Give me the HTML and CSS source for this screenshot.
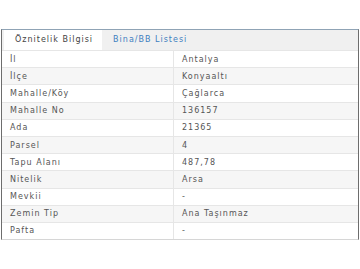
FILE: index.html
```html
<!DOCTYPE html>
<html>
<head>
<meta charset="utf-8">
<link rel="stylesheet" href="styles.css">
</head>
<body>
<div class="panel">
  <div class="tabs">
    <div class="tab active">Öznitelik Bilgisi</div>
    <div class="tab">Bina/BB Listesi</div>
  </div>
  <table class="attrs">
    <tr><td class="k">İl</td><td class="v">Antalya</td></tr>
    <tr><td class="k">İlçe</td><td class="v">Konyaaltı</td></tr>
    <tr><td class="k">Mahalle/Köy</td><td class="v">Çağlarca</td></tr>
    <tr><td class="k">Mahalle No</td><td class="v">136157</td></tr>
    <tr><td class="k">Ada</td><td class="v">21365</td></tr>
    <tr><td class="k">Parsel</td><td class="v">4</td></tr>
    <tr><td class="k">Tapu Alanı</td><td class="v">487,78</td></tr>
    <tr><td class="k">Nitelik</td><td class="v">Arsa</td></tr>
    <tr><td class="k">Mevkii</td><td class="v">-</td></tr>
    <tr><td class="k">Zemin Tip</td><td class="v">Ana Taşınmaz</td></tr>
    <tr><td class="k">Pafta</td><td class="v">-</td></tr>
  </table>
</div>
</body>
</html>
```
FILE: styles.css
```css
html, body {
  margin: 0;
  padding: 0;
  background: #fff;
}
body {
  padding: 29px 1px 0 1px;
  font-family: "DejaVu Sans", Verdana, sans-serif;
}
.panel {
  width: 356px;
  border-top: 1px solid #8fa3b5;
  border-left: 1px solid #6d6d6d;
  border-right: 1px solid #6d6d6d;
  border-bottom: 1px solid #d6d6d6;
  background: #fff;
}
.tabs {
  display: flex;
  height: 20px;
  background: #f0f0f0;
  padding-left: 2px;
  border-bottom: 1px solid #e6e6e6;
}
.tab {
  font-size: 8px;
  letter-spacing: 1px;
  line-height: 20px;
  padding: 0 9px 0 11px;
  white-space: nowrap;
  color: #3f7fc0;
}
.tab.active {
  background: #fff;
  color: #444;
}
.attrs {
  width: 100%;
  border-collapse: collapse;
  font-size: 8px;
  letter-spacing: 1px;
  color: #555;
}
.attrs td {
  height: 16.2px;
  padding: 0 0 0 8px;
  border-top: 1px solid #e6e6e6;
  vertical-align: middle;
  white-space: nowrap;
}
.attrs tr:first-child td {
  border-top: none;
}
.attrs tr:nth-child(even) td {
  background: #f6f6f6;
}
.attrs td.k {
  width: 163px;
  border-right: 1px solid #e6e6e6;
}
```
